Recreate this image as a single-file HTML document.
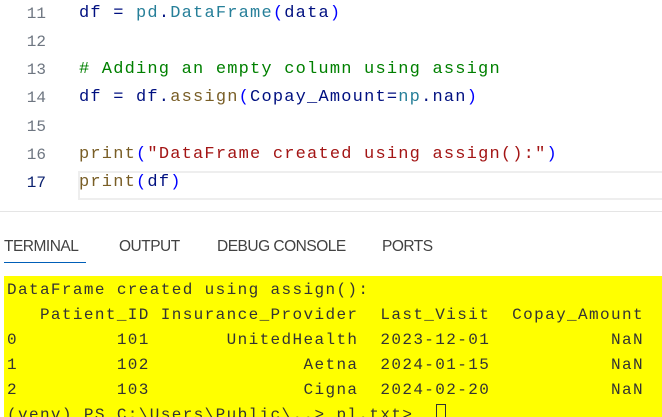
<!DOCTYPE html>
<html><head><style>
body{margin:0;width:662px;height:417px;overflow:hidden;background:#fff;position:relative;font-family:"Liberation Mono",monospace}
.ln{position:absolute;left:0;width:46px;text-align:right;font-size:16px;color:#6e7681}
.c{position:absolute;left:79px;font-size:17px;letter-spacing:1.2px;white-space:pre;color:#001080}
.k{color:#267f99}.f{color:#795e26}.s{color:#a31515}.cm{color:#008000}.p{color:#0431fa}.b{color:#0000ff}
.t{position:absolute;font-family:"Liberation Sans",sans-serif;font-size:15.5px;color:#424242;top:238px;letter-spacing:-0.5px}
.term{position:absolute;left:4px;top:276px;width:658px;height:141px;background:#ffff00;overflow:hidden}
.tl{position:absolute;left:3px;font-size:16px;letter-spacing:1.38px;white-space:pre;color:#333}
</style></head><body>
<div class="ln" style="top:5px">11</div><div class="c" style="top:4px">df = <span class="k">pd</span>.<span class="k">DataFrame</span><span class="b">(</span>data<span class="b">)</span></div>
<div class="ln" style="top:33px">12</div>
<div class="ln" style="top:61px">13</div><div class="c cm" style="top:60px"># Adding an empty column using assign</div>
<div class="ln" style="top:89px">14</div><div class="c" style="top:88px">df = df.<span class="f">assign</span><span class="b">(</span>Copay_Amount=<span class="k">np</span>.nan<span class="b">)</span></div>
<div class="ln" style="top:118px">15</div>
<div class="ln" style="top:146px">16</div><div class="c" style="top:145px"><span class="f">print</span><span class="b">(</span><span class="s">"DataFrame created using assign():"</span><span class="b">)</span></div>
<div style="position:absolute;left:78px;top:171px;width:590px;height:25px;border:2px solid #eee;border-right:none"></div>
<div class="ln" style="top:174px;color:#0b216f">17</div><div class="c" style="top:173px"><span class="f">print</span><span class="b">(</span>df<span class="b">)</span></div>
<div style="position:absolute;left:0;top:211px;width:662px;height:1px;background:#e5e5e5"></div>
<div class="t" style="left:4px">TERMINAL</div><div style="position:absolute;left:4px;top:262px;width:82px;height:1px;background:#005fb8"></div>
<div class="t" style="left:119px">OUTPUT</div>
<div class="t" style="left:217px">DEBUG CONSOLE</div>
<div class="t" style="left:382px">PORTS</div>
<div class="term">
<div class="tl" style="top:5px">DataFrame created using assign():</div>
<div class="tl" style="top:30px">   Patient_ID Insurance_Provider  Last_Visit  Copay_Amount</div>
<div class="tl" style="top:55px">0         101       UnitedHealth  2023-12-01           NaN</div>
<div class="tl" style="top:80px">1         102              Aetna  2024-01-15           NaN</div>
<div class="tl" style="top:105px">2         103              Cigna  2024-02-20           NaN</div>
<div class="tl" style="top:130px">(venv) PS C:\Users\Public\..> pl.txt&gt;</div>
<div style="position:absolute;left:432px;top:128px;width:8px;height:16px;border:1px solid #333"></div>
</div>
</body></html>
